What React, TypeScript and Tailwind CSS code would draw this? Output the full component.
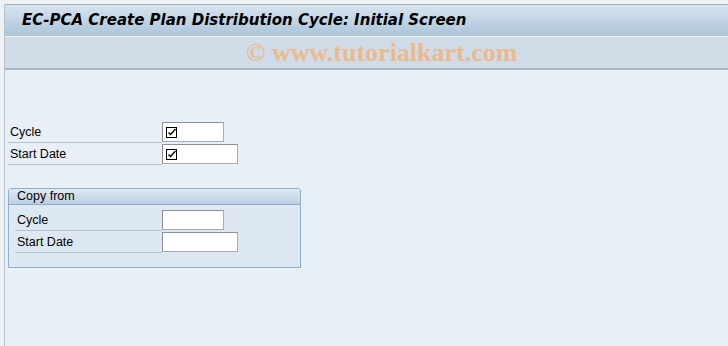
import React from 'react';

function CheckIcon() {
  return (
    <svg width="11" height="11" viewBox="0 0 11 11" className="block">
      <rect x="0.5" y="0.5" width="10" height="10" fill="none" stroke="#000" strokeWidth="1" />
      <path d="M2.5 5.5 L4.5 7.5 L9.5 2" fill="none" stroke="#000" strokeWidth="1.4" />
    </svg>
  );
}

function Field({ label, width, labelWidth, checked }: { label: string; width: string; labelWidth: string; checked?: boolean }) {
  return (
    <div className="flex items-end h-[22px]">
      <div className={`${labelWidth} h-[20px] border-b border-[#b8c2cc] flex items-center pl-[2px]`}>
        {label}
      </div>
      <div
        className={`${width} h-[20px] bg-white border border-[#a8acb0] border-t-[#8e9296] border-l-[#8e9296] flex items-center pl-[3px] mb-[1px]`}
      >
        {checked && <CheckIcon />}
      </div>
    </div>
  );
}

export default function App() {
  return (
    <div className="w-[728px] h-[346px] bg-[#eef2f7] pt-[4px] overflow-hidden text-[12.5px] text-black font-['Liberation_Sans',sans-serif]">
      <div className="h-[342px] border-l border-[#b6c3cf] ml-[4px] flex flex-col">
        {/* Title */}
        <div className="h-[32px] border-t border-[#a9b2bc] bg-gradient-to-b from-[#d7e4ef] to-[#adc4da] flex items-center pl-[17px]">
          <h1 className="text-[15px] font-bold italic font-['DejaVu_Sans',sans-serif]">
            EC-PCA Create Plan Distribution Cycle: Initial Screen
          </h1>
        </div>
        {/* Toolbar with watermark */}
        <div className="h-[34px] border-t border-[#eef3f8] border-b-2 border-b-[#a9b5c1] bg-[#cfdce7] flex items-center pl-[241px]">
          <span className="text-[26px] leading-none font-bold text-[#ebb98c] font-['Liberation_Serif',serif]">
            © www.tutorialkart.com
          </span>
        </div>
        {/* Body */}
        <div className="flex-1 bg-[#e8eff7] pt-[51px] pl-[3px]">
          <Field label="Cycle" width="w-[62px]" labelWidth="w-[154px]" checked />
          <Field label="Start Date" width="w-[76px]" labelWidth="w-[154px]" checked />

          <div className="mt-[23px] w-[293px] h-[80px] border border-[#8eaecb] rounded-t-[3px] bg-[#dde8f2]">
            <div className="h-[16px] border-b border-[#8eaecb] bg-gradient-to-b from-[#dfe9f3] to-[#bcd0e3] flex items-center pl-[8px]">
              Copy from
            </div>
            <div className="pl-[6px] pt-[4px]">
              <Field label="Cycle" width="w-[62px]" labelWidth="w-[147px]" />
              <Field label="Start Date" width="w-[76px]" labelWidth="w-[147px]" />
            </div>
          </div>
        </div>
      </div>
    </div>
  );
}
